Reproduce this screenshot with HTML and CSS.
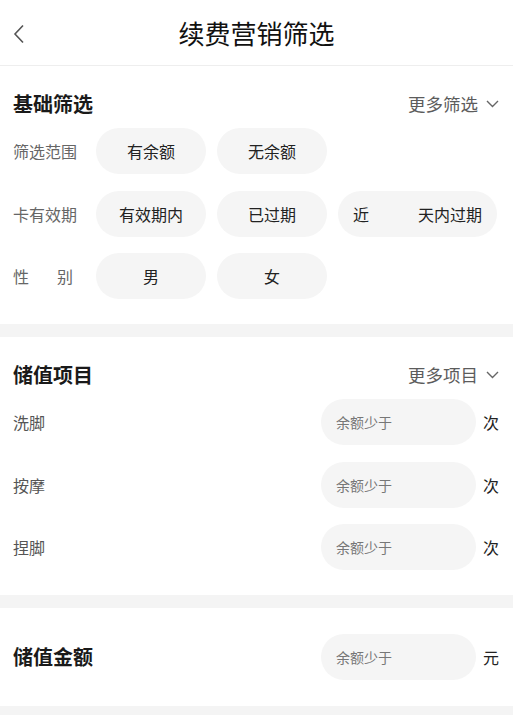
FILE: index.html
```html
<!DOCTYPE html>
<html lang="zh-CN">

<head>
    <meta charset="UTF-8">
    <meta name="viewport" content="width=device-width, initial-scale=1.0">
    <title>续费营销筛选</title>
    <link rel="stylesheet" href="styles.css">
</head>

<body>
    <header class="topbar">
        <a class="back" href="#">
            <svg width="12" height="20" viewBox="0 0 12 20">
                <polyline points="10,1.5 2,10 10,18.5" fill="none" stroke="#555" stroke-width="1.6" />
            </svg>
        </a>
        <h1>续费营销筛选</h1>
        <span></span>
    </header>

    <section class="block">
        <div class="block-head">
            <h2>基础筛选</h2>
            <a class="more" href="#">更多筛选
                <svg width="13" height="8" viewBox="0 0 13 8">
                    <polyline points="1,1 6.5,6.5 12,1" fill="none" stroke="#666" stroke-width="1.4" />
                </svg>
            </a>
        </div>
        <div class="rows">
            <div class="row">
                <span class="label">筛选范围</span>
                <div class="chips">
                    <button class="chip">有余额</button>
                    <button class="chip">无余额</button>
                </div>
            </div>
            <div class="row">
                <span class="label">卡有效期</span>
                <div class="chips">
                    <button class="chip">有效期内</button>
                    <button class="chip">已过期</button>
                    <div class="chip chip-wide">
                        <span>近</span>
                        <input type="text" class="days">
                        <span>天内过期</span>
                    </div>
                </div>
            </div>
            <div class="row">
                <span class="label label-short">性别</span>
                <div class="chips">
                    <button class="chip">男</button>
                    <button class="chip">女</button>
                </div>
            </div>
        </div>
    </section>

    <div class="gap"></div>

    <section class="block">
        <div class="block-head">
            <h2>储值项目</h2>
            <a class="more" href="#">更多项目
                <svg width="13" height="8" viewBox="0 0 13 8">
                    <polyline points="1,1 6.5,6.5 12,1" fill="none" stroke="#666" stroke-width="1.4" />
                </svg>
            </a>
        </div>
        <div class="rows">
            <div class="row item">
                <span class="name">洗脚</span>
                <input type="text" class="amount" placeholder="余额少于">
                <span class="unit">次</span>
            </div>
            <div class="row item">
                <span class="name">按摩</span>
                <input type="text" class="amount" placeholder="余额少于">
                <span class="unit">次</span>
            </div>
            <div class="row item">
                <span class="name">捏脚</span>
                <input type="text" class="amount" placeholder="余额少于">
                <span class="unit">次</span>
            </div>
        </div>
    </section>

    <div class="gap"></div>

    <section class="block block-single">
        <div class="row item">
            <h2>储值金额</h2>
            <input type="text" class="amount" placeholder="余额少于">
            <span class="unit">元</span>
        </div>
    </section>

    <div class="foot"></div>
</body>

</html>
```

FILE: styles.css
```css
* {
    margin: 0;
    padding: 0;
    box-sizing: border-box;
}

body {
    width: 513px;
    background-color: #ffffff;
    font-family: "Noto Sans CJK SC", "Noto Sans", sans-serif;
    color: #222222;
}

/* 顶部标题栏 */
.topbar {
    height: 66px;
    display: grid;
    grid-template-columns: 1fr auto 1fr;
    align-items: center;
    padding: 0 13px;
    border-bottom: 1px solid #eeeeee;
}

.topbar .back {
    display: flex;
    align-items: center;
    padding-top: 2px;
}

.topbar h1 {
    font-size: 26px;
    font-weight: normal;
    line-height: 30px;
    color: #111111;
}

/* 筛选区块 */
.block {
    padding: 16px 14px 25px 13px;
}

.block-head {
    height: 44px;
    margin-bottom: 2px;
    display: flex;
    align-items: center;
    justify-content: space-between;
}

.block h2 {
    font-size: 20px;
    font-weight: bold;
    line-height: 24px;
    color: #1a1a1a;
}

.more {
    display: flex;
    align-items: center;
    gap: 8px;
    font-size: 17.5px;
    line-height: 22px;
    color: #5c5c5c;
    text-decoration: none;
}

.rows {
    display: flex;
    flex-direction: column;
    gap: 16.5px;
}

.row {
    height: 46px;
    display: flex;
    align-items: center;
}

.label {
    width: 64px;
    margin-right: 19px;
    font-size: 16px;
    line-height: 20px;
    color: #666666;
    white-space: nowrap;
    text-align: justify;
    text-align-last: justify;
}

.label-short {
    width: 60px;
    margin-right: 23px;
}

.chips {
    display: flex;
    gap: 11px;
}

.chip {
    width: 110px;
    height: 46px;
    border: none;
    border-radius: 23px;
    background-color: #f5f5f5;
    font-family: inherit;
    font-size: 16px;
    color: #222222;
    cursor: pointer;
}

.chip-wide {
    width: 159px;
    display: flex;
    align-items: center;
    justify-content: space-between;
    padding: 0 15px;
}

.days {
    width: 46px;
    border: none;
    outline: none;
    background: transparent;
    font-size: 16px;
}

/* 储值项目 */
.item .name {
    flex: 1;
    font-size: 16px;
    line-height: 20px;
    color: #555555;
}

.item h2 {
    flex: 1;
}

.amount {
    width: 155px;
    height: 46px;
    border: none;
    outline: none;
    border-radius: 23px;
    background-color: #f5f5f5;
    padding: 0 15px;
    font-family: inherit;
    font-size: 14px;
    color: #333333;
}

.amount::placeholder {
    color: #777777;
}

.unit {
    width: 16px;
    margin-left: 7px;
    font-size: 16px;
    line-height: 20px;
    color: #222222;
}

.block-single {
    padding: 26px 14px 26px 13px;
}

/* 区块间隔 */
.gap {
    height: 13px;
    background-color: #f4f4f4;
}

.foot {
    height: 20px;
    background-color: #f4f4f4;
}
```
